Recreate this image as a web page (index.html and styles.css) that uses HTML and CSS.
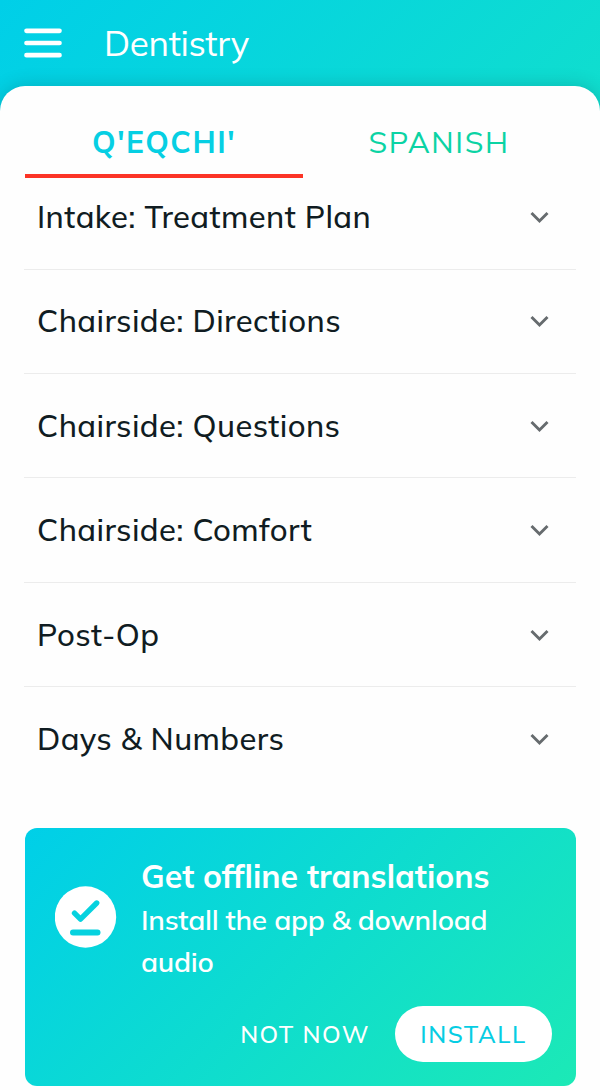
FILE: index.html
```html
<!DOCTYPE html>
<html lang="en">
<head>
<meta charset="utf-8">
<title>Dentistry</title>
<link rel="stylesheet" href="styles.css">
</head>
<body>
<svg class="defs" width="0" height="0" aria-hidden="true">
  <symbol id="chevron" viewBox="0 0 20 14"><path d="M1.5 3 9.5 11 17.5 3" fill="none" stroke="currentColor" stroke-width="2.9"/></symbol>
</svg>
<header class="topbar">
  <svg class="menu-icon" width="38" height="30" viewBox="0 0 38 30"><path d="M2.5 2.8h33M2.5 15h33M2.5 27.2h33" stroke="#fff" stroke-width="4.7" stroke-linecap="round"/></svg>
  <h1 class="title">Dentistry</h1>
</header>
<main class="sheet">
  <nav class="tabs">
    <a class="tab tab-active">Q'EQCHI'</a>
    <a class="tab">SPANISH</a>
  </nav>
  <section class="list">
    <div class="row"><span class="label">Intake: Treatment Plan</span><svg class="chevron"><use href="#chevron"/></svg></div>
    <div class="row"><span class="label">Chairside: Directions</span><svg class="chevron"><use href="#chevron"/></svg></div>
    <div class="row"><span class="label">Chairside: Questions</span><svg class="chevron"><use href="#chevron"/></svg></div>
    <div class="row"><span class="label">Chairside: Comfort</span><svg class="chevron"><use href="#chevron"/></svg></div>
    <div class="row"><span class="label">Post-Op</span><svg class="chevron"><use href="#chevron"/></svg></div>
    <div class="row"><span class="label">Days &amp; Numbers</span><svg class="chevron"><use href="#chevron"/></svg></div>
  </section>
  <aside class="promo">
    <div class="promo-body">
      <svg class="promo-icon" width="62" height="62" viewBox="0 0 62 62"><circle cx="30.5" cy="31" r="30.7" fill="#fff"/><path d="M19.5 27.2 25.5 33.2 41.7 17" fill="none" stroke="#06d2df" stroke-width="5.4" stroke-linecap="round" stroke-linejoin="round"/><path d="M18 46.5h24.5" stroke="#06d2df" stroke-width="6" stroke-linecap="round"/></svg>
      <div class="promo-copy">
        <h2 class="promo-title">Get offline translations</h2>
        <p class="promo-text">Install the app &amp; download audio</p>
      </div>
    </div>
    <div class="actions">
      <button class="btn">NOT NOW</button>
      <button class="btn install">INSTALL</button>
    </div>
  </aside>
</main>
</body>
</html>
```
FILE: styles.css
```css
* { box-sizing: border-box; }
body {
  margin: 0;
  width: 600px;
  height: 1090px;
  overflow: hidden;
  font-family: Mulish, Muli, Lato, sans-serif;
  background: linear-gradient(135deg, #00cfe8 0, #10dece 500px);
  color: #101c22;
}
.defs { display: block; }
.topbar {
  height: 86px;
  padding: 0 24px;
  display: flex;
  align-items: center;
  gap: 42px;
  color: #fff;
}
.title { margin: 0; font-size: 35px; font-weight: 400; line-height: 44px; letter-spacing: -0.35px; }
.sheet {
  height: 1004px;
  padding: 0 24px;
  background: #fefefe;
  border-radius: 25px 25px 0 0;
  box-shadow: 0 0 18px rgba(0, 60, 70, 0.24);
}
.tabs { display: flex; height: 92px; }
.tab {
  flex: 0 0 272px;
  padding-top: 19px;
  text-align: center;
  font-size: 30px;
  font-weight: 400;
  line-height: 74px;
  letter-spacing: 1.6px;
  color: #0bd3a4;
}
.tab-active {
  flex-basis: 278px;
  margin-left: 1px;
  border-bottom: 4px solid #fc3426;
  font-weight: 700;
  letter-spacing: 1.5px;
  color: #06cfe3;
}
.row {
  height: 104.4px;
  padding: 0 26px 0 13px;
  display: flex;
  align-items: center;
  justify-content: space-between;
  border-bottom: 1px solid #ececec;
}
.row:first-child { height: 91.7px; padding-bottom: 13px; }
.row:last-child { border-bottom: 0; }
.label { font-size: 31px; font-weight: 500; line-height: 40px; letter-spacing: 0.4px; }
.chevron { width: 20px; height: 14px; color: #666b6e; }
.promo {
  height: 258px;
  margin: 36.5px 0 0 1px;
  padding: 27px 24px 24px 30px;
  display: flex;
  flex-direction: column;
  justify-content: space-between;
  border-radius: 12px;
  background: linear-gradient(135deg, #00cfe8, #1ce9b6);
  color: #fff;
}
.promo-body { display: flex; gap: 24px; }
.promo-icon { flex: none; margin-top: 31px; }
.promo-title { margin: 0; font-size: 32px; font-weight: 700; line-height: 42px; white-space: nowrap; }
.promo-text { margin: 2px 0 0; font-size: 28px; font-weight: 600; line-height: 41.5px; letter-spacing: -0.25px; }
.actions { display: flex; justify-content: flex-end; gap: 25px; }
.btn {
  height: 56px;
  padding: 0;
  border: 0;
  background: none;
  color: #fff;
  font: 500 24px/57px Mulish, Muli, Lato, sans-serif;
  letter-spacing: 1.5px;
  white-space: nowrap;
}
.install { width: 157px; border-radius: 28px; background: #fff; color: #06cde3; }
```
